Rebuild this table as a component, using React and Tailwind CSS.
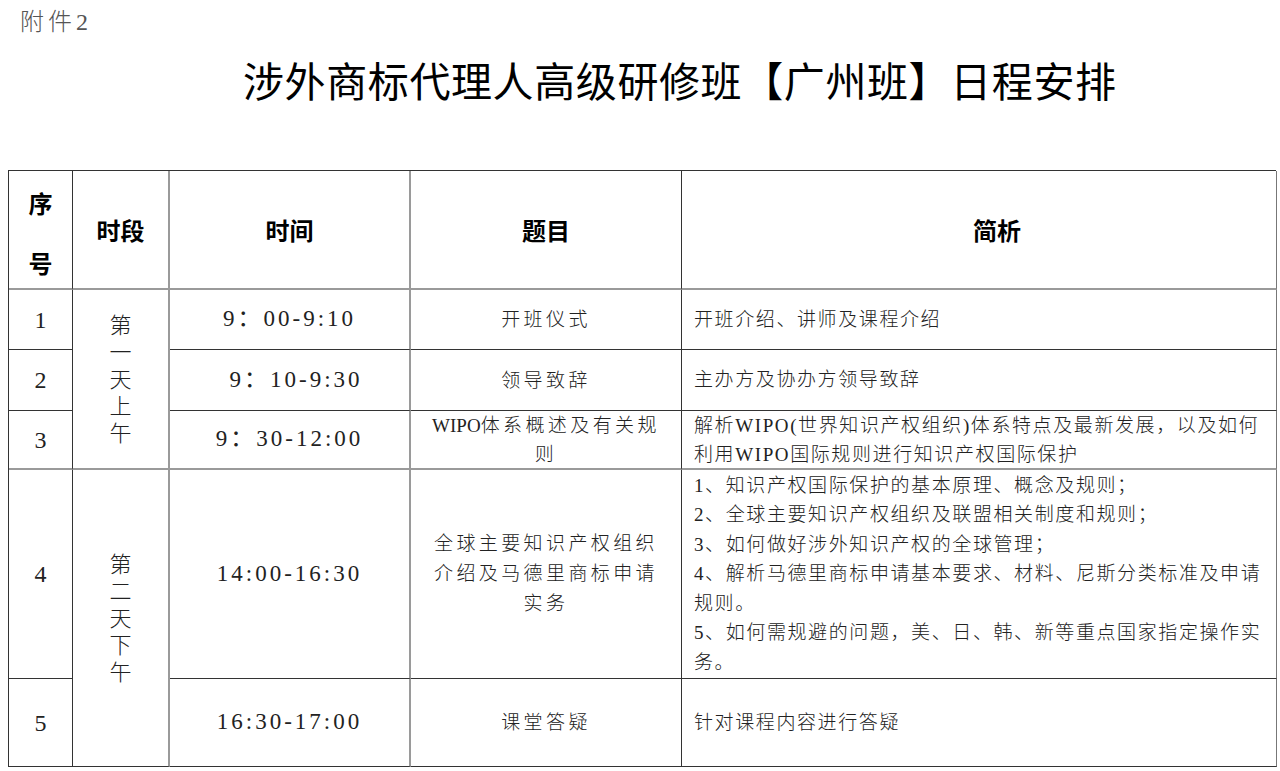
import React from "react";

const SERIF = "font-['Liberation_Serif','Noto_Sans_CJK_SC',serif]";
const SANS = "font-['Noto_Sans_CJK_SC','Noto_Sans',sans-serif]";

function Cell({ className = "", children }) {
  return <div className={"flex items-center " + className}>{children}</div>;
}

function Vert({ chars }) {
  return (
    <div className={"flex flex-col items-center text-[22px] leading-[27px] font-light text-[#222] " + SERIF}>
      {chars.split("").map((c, i) => (
        <span key={i}>{c}</span>
      ))}
    </div>
  );
}

export default function App() {
  const num = "justify-center border-r border-b border-r-[#333] text-[24px] text-[#222] " + SERIF;
  const time = "justify-center border-r-2 border-r-[#9a9a9a] text-[23px] tracking-[3px] text-[#222] " + SERIF;
  const topic = "justify-center text-center border-r border-r-[#333] text-[19px] tracking-[3.4px] leading-[29px] font-light text-[#222] " + SERIF;
  const desc = "justify-start pl-[12px] border-r border-r-[#777] text-[19px] tracking-[1.6px] leading-[29.5px] font-light text-[#222] " + SERIF;
  const head = "justify-center border-b-2 border-b-[#9a9a9a] text-[24px] font-bold text-black " + SANS;
  return (
    <div className={"w-[1280px] h-[771px] bg-white overflow-hidden " + SANS}>
      <div className={"pl-[20px] pt-[8px] text-[24px] tracking-[4px] leading-[28px] text-[#555] font-light " + SERIF}>
        附件2
      </div>
      <div className="mt-[18px] pl-[243px] text-[41px] tracking-[0.6px] leading-[50px] text-black whitespace-nowrap">
        涉外商标代理人高级研修班【广州班】日程安排
      </div>
      <div className="mt-[66px] ml-[8px] w-[1268px] grid grid-cols-[64px_97px_241px_271px_595px] grid-rows-[119px_60px_61px_59px_209px_88px] border-t border-l border-[#333]">
        {/* header */}
        <Cell className={head + " border-r border-r-[#333] text-[23px] leading-[60px] text-center"}>
          <div className="flex flex-col items-center pt-[6px]">
            <span>序</span>
            <span>号</span>
          </div>
        </Cell>
        <Cell className={head + " border-r-2 border-r-[#9a9a9a]"}>时段</Cell>
        <Cell className={head + " border-r-2 border-r-[#9a9a9a]"}>时间</Cell>
        <Cell className={head + " border-r border-r-[#333]"}>题目</Cell>
        <Cell className={head + " pl-[36px] border-r border-r-[#777]"}>简析</Cell>

        {/* row 1 */}
        <Cell className={num + " border-b-[#333]"}>1</Cell>
        <Cell className="row-span-3 justify-center border-r-2 border-r-[#9a9a9a] border-b-2 border-b-[#9a9a9a]">
          <Vert chars="第一天上午" />
        </Cell>
        <Cell className={time + " border-b border-b-[#333]"}>9：00-9:10</Cell>
        <Cell className={topic + " border-b border-b-[#333]"}>开班仪式</Cell>
        <Cell className={desc + " border-b border-b-[#333]"}>开班介绍、讲师及课程介绍</Cell>

        {/* row 2 */}
        <Cell className={num + " border-b-[#333]"}>2</Cell>
        <Cell className={time + " border-b border-b-[#333] pl-[13px]"}>9：10-9:30</Cell>
        <Cell className={topic + " border-b border-b-[#333]"}>领导致辞</Cell>
        <Cell className={desc + " border-b border-b-[#333]"}>主办方及协办方领导致辞</Cell>

        {/* row 3 */}
        <Cell className={"justify-center border-r border-r-[#333] border-b-2 border-b-[#9a9a9a] text-[24px] text-[#222] " + SERIF}>3</Cell>
        <Cell className={time + " border-b-2 border-b-[#9a9a9a]"}>9：30-12:00</Cell>
        <Cell className={topic + " border-b-2 border-b-[#9a9a9a] leading-[28px]"}>
          <div className="w-full">
            <div className="whitespace-nowrap">
              <span className="tracking-[0px]">WIPO</span>体系概述及有关规
            </div>
            <div>则</div>
          </div>
        </Cell>
        <Cell className={desc + " border-b-2 border-b-[#9a9a9a] leading-[29px] tracking-[1.3px]"}>
          <div>
            <div className="whitespace-nowrap">解析WIPO(世界知识产权组织)体系特点及最新发展，以及如何</div>
            <div className="whitespace-nowrap">利用WIPO国际规则进行知识产权国际保护</div>
          </div>
        </Cell>

        {/* row 4 */}
        <Cell className={num + " border-b-[#333]"}>4</Cell>
        <Cell className="row-span-2 justify-center border-r-2 border-r-[#9a9a9a] border-b border-b-[#333]">
          <Vert chars="第二天下午" />
        </Cell>
        <Cell className={time + " border-b border-b-[#333]"}>14:00-16:30</Cell>
        <Cell className={topic + " border-b border-b-[#333] leading-[30px]"}>
          <div className="w-full">
            <div className="whitespace-nowrap">全球主要知识产权组织</div>
            <div className="whitespace-nowrap">介绍及马德里商标申请</div>
            <div>实务</div>
          </div>
        </Cell>
        <Cell className={desc + " border-b border-b-[#333]"}>
          <div>
            <div className="whitespace-nowrap">1、知识产权国际保护的基本原理、概念及规则；</div>
            <div className="whitespace-nowrap">2、全球主要知识产权组织及联盟相关制度和规则；</div>
            <div className="whitespace-nowrap">3、如何做好涉外知识产权的全球管理；</div>
            <div className="whitespace-nowrap">4、解析马德里商标申请基本要求、材料、尼斯分类标准及申请</div>
            <div className="whitespace-nowrap">规则。</div>
            <div className="whitespace-nowrap">5、如何需规避的问题，美、日、韩、新等重点国家指定操作实</div>
            <div className="whitespace-nowrap">务。</div>
          </div>
        </Cell>

        {/* row 5 */}
        <Cell className={num + " border-b-[#333]"}>5</Cell>
        <Cell className={time + " border-b border-b-[#333]"}>16:30-17:00</Cell>
        <Cell className={topic + " border-b border-b-[#333]"}>课堂答疑</Cell>
        <Cell className={desc + " border-b border-b-[#333]"}>针对课程内容进行答疑</Cell>
      </div>
    </div>
  );
}
